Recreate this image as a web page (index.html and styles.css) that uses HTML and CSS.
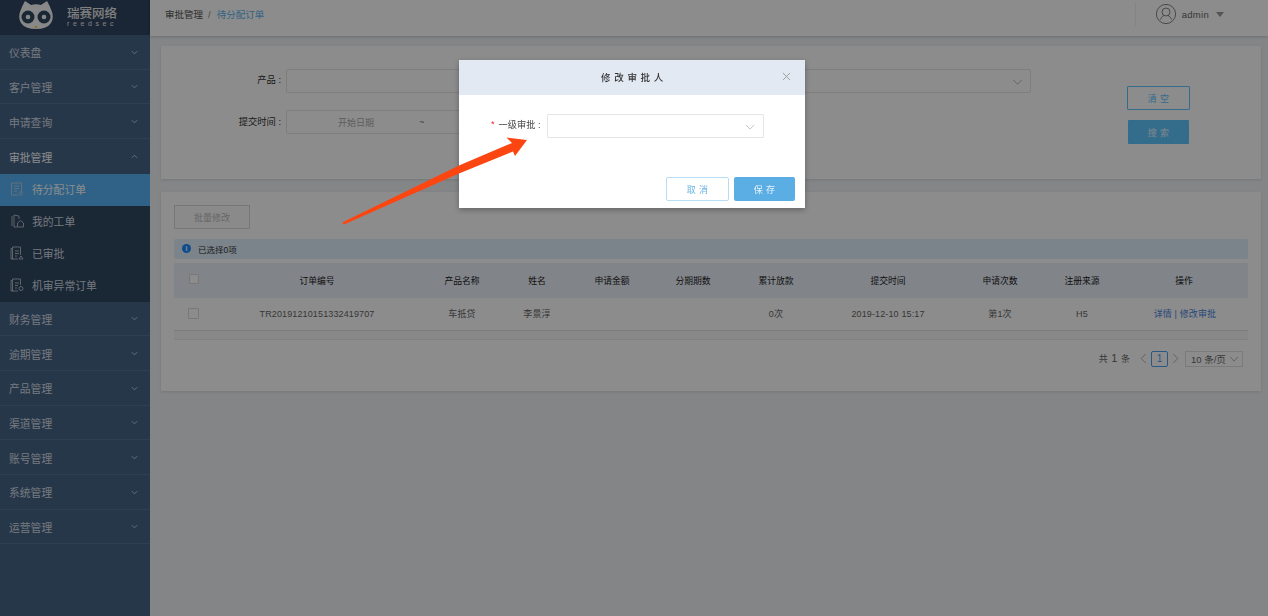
FILE: index.html
```html
<!DOCTYPE html>
<html lang="zh-CN">
<head>
<meta charset="utf-8">
<title>待分配订单</title>
<link rel="stylesheet" href="styles.css">
</head>
<body>
<div class="app">
  <aside class="sidebar">
    <div class="logo">
      <svg class="owl" width="34" height="30" viewBox="0 0 34 30">
        <path d="M6 1 L12 5 Q17 3.500 22 5 L28 1 Q31 6 33 12 Q35 18 32 23 Q28 29 17 29 Q6 29 2 23 Q-1 18 1 12 Q3 6 6 1Z" fill="#f8f8f8"/>
        <circle cx="9" cy="17" r="6.500" fill="#314761"/>
        <circle cx="25" cy="17" r="6.500" fill="#314761"/>
        <circle cx="9" cy="17" r="2.300" fill="#f8f8f8"/>
        <circle cx="25" cy="17" r="2.300" fill="#f8f8f8"/>
        <path d="M15.500 26 L18.500 26 L17 29Z" fill="#ffc83c"/>
      </svg>
      <div class="brand">
        <div class="brand-cn">瑞赛网络</div>
        <div class="brand-en">reedsec</div>
      </div>
    </div>
    <nav class="menu">
      <div class="group">仪表盘<svg class="chev" viewBox="0 0 8 5"><path d="M1 1l3 3 3-3"/></svg></div>
      <div class="group">客户管理<svg class="chev" viewBox="0 0 8 5"><path d="M1 1l3 3 3-3"/></svg></div>
      <div class="group">申请查询<svg class="chev" viewBox="0 0 8 5"><path d="M1 1l3 3 3-3"/></svg></div>
      <div class="group open">审批管理<svg class="chev" viewBox="0 0 8 5"><path d="M1 4l3-3 3 3"/></svg></div>
      <div class="sub">
        <div class="sub-item active"><svg class="sub-icon" viewBox="0 0 14 14"><path d="M1.500 1h10v9M1.500 1v12h7M4 4h5M4 6.500h5M4 9h3"/><circle cx="11" cy="11.500" r="1.600"/></svg>待分配订单</div>
        <div class="sub-item"><svg class="sub-icon" viewBox="0 0 14 14"><path d="M2 2v10M4 1l5 1v3M4 1v12h3"/><path d="M7.500 9l3-2.500 3 2.500v4h-6z"/></svg>我的工单</div>
        <div class="sub-item"><svg class="sub-icon" viewBox="0 0 14 14"><path d="M1 2.500h1.500V1h8v8M2.500 2.500V13H8M1 2.500V13h2M5 5h4M5 7.500h4M5 10h2"/><path d="M9 13l2-3 2 3z"/></svg>已审批</div>
        <div class="sub-item"><svg class="sub-icon" viewBox="0 0 14 14"><path d="M1 2.500h1.500V1h8v6M2.500 2.500V13H8M1 2.500V13h2M5 5h4M5 7.500h3M5 10h2"/><circle cx="11" cy="10.500" r="2"/></svg>机审异常订单</div>
      </div>
      <div class="group">财务管理<svg class="chev" viewBox="0 0 8 5"><path d="M1 1l3 3 3-3"/></svg></div>
      <div class="group">逾期管理<svg class="chev" viewBox="0 0 8 5"><path d="M1 1l3 3 3-3"/></svg></div>
      <div class="group">产品管理<svg class="chev" viewBox="0 0 8 5"><path d="M1 1l3 3 3-3"/></svg></div>
      <div class="group">渠道管理<svg class="chev" viewBox="0 0 8 5"><path d="M1 1l3 3 3-3"/></svg></div>
      <div class="group">账号管理<svg class="chev" viewBox="0 0 8 5"><path d="M1 1l3 3 3-3"/></svg></div>
      <div class="group">系统管理<svg class="chev" viewBox="0 0 8 5"><path d="M1 1l3 3 3-3"/></svg></div>
      <div class="group">运营管理<svg class="chev" viewBox="0 0 8 5"><path d="M1 1l3 3 3-3"/></svg></div>
    </nav>
  </aside>

  <div class="main">
    <header class="topbar">
      <div class="crumbs"><span>审批管理</span><span class="sep">/</span><span class="current">待分配订单</span></div>
      <div class="user">
        <svg class="avatar" viewBox="0 0 20 20"><circle cx="10" cy="10" r="9.600"/><circle cx="10" cy="8" r="4"/><path d="M4.500 15.500c1-3 3-3.800 3.500-3.800M15.500 15.500c-1-3-3-3.800-3.500-3.800"/></svg>
        <span class="user-name">admin</span>
        <span class="caret"></span>
      </div>
    </header>

    <div class="content">
      <section class="card form-card">
        <div class="fields">
          <div class="field-row">
            <label class="label lift">产品 :</label>
            <div class="input product"></div>
            <div class="input select">
              <svg class="select-chev" viewBox="0 0 12 7"><path d="M1 1l5 5 5-5"/></svg>
            </div>
          </div>
          <div class="field-row">
            <label class="label">提交时间 :</label>
            <div class="input range"><span class="range-start">开始日期</span><span class="tilde">~</span></div>
          </div>
        </div>
        <div class="actions">
          <button class="btn ghost">清 空</button>
          <button class="btn primary">搜 索</button>
        </div>
      </section>

      <section class="card list-card">
        <button class="batch">批量修改</button>
        <div class="alert"><span class="info">i</span>已选择0项</div>
        <table class="table">
          <colgroup>
            <col class="c-check"><col class="c-no"><col class="c-prod"><col class="c-name"><col class="c-amount"><col class="c-term"><col class="c-loan"><col class="c-time"><col class="c-count"><col class="c-src"><col class="c-op">
          </colgroup>
          <thead>
            <tr>
              <th><span class="check head-check"></span></th>
              <th>订单编号</th><th>产品名称</th><th>姓名</th><th>申请金额</th><th>分期期数</th><th>累计放款</th><th>提交时间</th><th>申请次数</th><th>注册来源</th><th>操作</th>
            </tr>
          </thead>
          <tbody>
            <tr>
              <td><span class="check"></span></td>
              <td>TR20191210151332419707</td><td>车抵贷</td><td>李景淳</td><td></td><td></td><td>0次</td><td>2019-12-10 15:17</td><td>第1次</td><td>H5</td>
              <td class="ops">详情 | 修改审批</td>
            </tr>
          </tbody>
        </table>
        <div class="scrollbar"></div>
        <div class="pager">
          <span class="total">共 <b>1</b> 条</span>
          <svg class="pg-arrow" viewBox="0 0 7 12"><path d="M6 1L1 6l5 5"/></svg>
          <span class="pg-num">1</span>
          <svg class="pg-arrow" viewBox="0 0 7 12"><path d="M1 1l5 5-5 5"/></svg>
          <span class="pg-size">10 条/页<svg class="pg-chev" viewBox="0 0 12 7"><path d="M1 1l4.500 5 4.500-5"/></svg></span>
        </div>
      </section>
    </div>
  </div>
</div>

<div class="mask">
  <div class="modal">
    <div class="modal-head">
      <span class="modal-title">修改审批人</span>
      <svg class="modal-close" viewBox="0 0 10 10"><path d="M1 1l8 8M9 1l-8 8"/></svg>
    </div>
    <div class="modal-body">
      <div class="modal-label"><span class="star">*</span><span>一级审批 :</span></div>
      <div class="modal-select"><svg class="modal-chev" viewBox="0 0 12 7"><path d="M1 1l5 5 5-5"/></svg></div>
    </div>
    <div class="modal-foot">
      <button class="m-btn cancel">取 消</button>
      <button class="m-btn save">保 存</button>
    </div>
  </div>
</div>

<svg class="arrow" width="1268" height="616" viewBox="0 0 1268 616">
  <polygon points="342,222.500 459,165.500 512,143 506.500,137.500 527,140 515,156 513,151.500 459,173.500 344,224.500" fill="#fb4612"/>
</svg>
</body>
</html>
```
FILE: styles.css
```css
* { box-sizing: border-box; }
html, body { margin: 0; height: 100%; overflow: hidden; }
body {
  font-family: "Liberation Sans", "Noto Sans CJK SC", sans-serif;
  font-size: 9px;
  color: #333;
  background: #f0f3f5;
}
.app { display: flex; height: 616px; }

.sidebar { width: 150px; flex: none; background: #486487; }
.logo {
  height: 35px;
  background: #314561;
  display: flex;
  padding-left: 19px;
  overflow: hidden;
}
.owl { flex: none; }
.brand { margin-left: 14px; color: #e8e8e8; padding-top: 7px; }
.brand-cn { font-size: 12.500px; font-weight: 500; line-height: 15px; white-space: nowrap; }
.brand-en { font-size: 7px; line-height: 8px; letter-spacing: 3.600px; margin-top: -2px; }

.group {
  height: 34.670px;
  display: flex;
  align-items: center;
  justify-content: space-between;
  padding: 1px 12px 0 9px;
  font-size: 10.800px;
  color: #d5dde5;
  border-bottom: 1px solid #55749a;
}
.group.open { color: #fff; border-bottom: 0; }
.chev { width: 7px; height: 5px; fill: none; stroke: #c8d0d8; stroke-width: 1.100; }
.sub { background: #314761; }
.sub-item {
  height: 32px;
  display: flex;
  align-items: center;
  padding: 0 0 2px 10px;
  font-size: 10.800px;
  color: #d5dde5;
}
.sub-item.active { background: #56b3f5; color: #fff; }
.sub-icon { width: 14px; height: 14px; margin-right: 8px; fill: none; stroke: #c9d2db; stroke-width: .8; }

.main { flex: 1; min-width: 0; display: flex; flex-direction: column; }
.topbar {
  height: 36px;
  background: #fff;
  display: flex;
  align-items: center;
  justify-content: space-between;
  padding: 0 44px 8px 15px;
  box-shadow: 0 1px 3px rgba(0, 0, 0, .18);
  position: relative;
}
.crumbs { font-size: 9.500px; color: #555; display: flex; align-items: baseline; }
.sep { margin: 0 6px 0 5px; color: #888; }
.current { color: #5cb4ee; }
.user {
  display: flex;
  align-items: center;
  height: 24px;
  padding-left: 20px;
  border-left: 1px solid #f0f0f0;
}
.avatar { width: 20px; height: 20px; fill: none; stroke: #666; stroke-width: .8; }
.user-name { margin-left: 6px; font-size: 9.500px; letter-spacing: .3px; color: #666; }
.caret {
  margin-left: 7px;
  border-left: 4px solid transparent;
  border-right: 4px solid transparent;
  border-top: 5px solid #999;
}

.content { padding: 10px 7px 0 11px; display: flex; flex-direction: column; gap: 13px; }
.card { background: #fff; box-shadow: 0 1px 3px rgba(0, 0, 0, .12); }

.form-card { height: 133px; display: flex; padding-top: 23px; }
.fields { width: 870px; display: flex; flex-direction: column; gap: 17px; flex: none; }
.field-row { display: flex; align-items: center; }
.label { width: 120px; text-align: right; font-size: 9.300px; color: #333; padding-bottom: 2px; flex: none; }
.label.lift { padding-bottom: 5px; }
.input { height: 24px; border: 1px solid #e6e6e6; border-radius: 2px; margin-left: 5px; position: relative; }
.product { width: 330px; }
.select { width: 330px; margin-left: 85px; }
.range { width: 350px; color: #aaa; display: flex; align-items: center; font-size: 9px; padding-left: 51px; }
.range-start { width: 81px; }
.tilde { width: 60px; color: #777; }
.select-chev { position: absolute; right: 7px; top: 9px; width: 11px; height: 6px; fill: none; stroke: #aaa; stroke-width: 1; }
.actions { margin: 17px 0 0 96px; display: flex; flex-direction: column; align-items: center; gap: 10px; width: 63px; }
.btn { font: inherit; font-size: 9px; height: 24px; border-radius: 1px; letter-spacing: .3px; }
.ghost { width: 63px; background: #fff; border: 1px solid #60c5ff; color: #60c5ff; }
.primary { width: 61px; background: #60c5ff; border: 0; color: #e8f6ff; }

.list-card { height: 199px; padding: 13px 13px 0; }
.batch {
  display: block;
  width: 76px;
  height: 24px;
  font: inherit;
  font-size: 9px;
  color: #bbb;
  background: #fbfbfb;
  border: 1px solid #d9d9d9;
}
.alert {
  margin-top: 10px;
  height: 20px;
  border-radius: 2px;
  background: #e1f1fe;
  display: flex;
  align-items: center;
  padding-left: 8px;
  font-size: 8.500px;
  color: #333;
}
.info {
  width: 9px;
  height: 9px;
  border-radius: 50%;
  background: #1a8cff;
  color: #fff;
  font-size: 7px;
  font-weight: bold;
  line-height: 9px;
  text-align: center;
  margin-right: 7px;
  margin-top: -2px;
}
.table { margin-top: 4px; width: 1074px; border-collapse: collapse; table-layout: fixed; }
.c-check { width: 40px; } .c-no { width: 206px; } .c-prod { width: 84px; } .c-name { width: 66px; }
.c-amount { width: 84px; } .c-term { width: 78px; } .c-loan { width: 88px; } .c-time { width: 136px; }
.c-count { width: 88px; } .c-src { width: 76px; } .c-op { width: 128px; }
th { height: 35px; background: #ecf2fc; font-weight: normal; font-size: 8.800px; color: #222; text-align: center; padding: 0; }
td { height: 32px; font-size: 9px; color: #666; text-align: center; padding: 0; letter-spacing: .13px; border-bottom: 1px solid #e4e4e4; }
.ops { color: #4a86e0; padding-left: 2px; }
.check { display: block; width: 11px; height: 11px; margin: 0 auto 0 14px; border: 1px solid #d9d9d9; border-radius: 1px; background: #fff; }
.head-check { margin-top: -4px; margin-left: 15px; width: 10px; height: 10px; }
.scrollbar { height: 9px; background: #f7f7f7; border-bottom: 1px solid #ececec; }
.pager { display: flex; align-items: center; justify-content: flex-end; margin-top: 11px; padding-right: 5px; font-size: 9px; color: #666; }
.total { margin-right: 1px; }
.total b { font-weight: normal; font-size: 11px; margin: 0 1px; }
.pg-arrow { width: 7px; height: 11px; margin: 0 5px 0 9px; fill: none; stroke: #aaa; stroke-width: 1; }
.pg-num { width: 17px; height: 16px; margin-left: -1px; border: 1px solid #4aa3f0; border-radius: 2px; color: #4aa3f0; font-size: 10px; text-align: center; line-height: 14px; }
.pg-num + .pg-arrow { margin: 0 6px 0 4px; }
.pg-size { width: 58px; height: 16px; border: 1px solid #e0e0e0; display: flex; align-items: center; justify-content: space-between; padding: 0 2px 0 5px; font-size: 9.500px; white-space: nowrap; }
.pg-chev { width: 11px; height: 6px; fill: none; stroke: #aaa; stroke-width: 1; }

.mask {
  position: fixed;
  inset: 0;
  background: rgba(0, 0, 0, .45);
  display: flex;
  justify-content: center;
  padding: 60px 4px 0 0;
}
.modal { width: 346px; height: 148px; background: #fff; box-shadow: 0 2px 6px rgba(0, 0, 0, .3); display: flex; flex-direction: column; }
.modal-head { height: 35px; background: #e3e9f3; position: relative; display: flex; align-items: center; justify-content: center; flex: none; padding-bottom: 2px; }
.modal-title { font-size: 9.500px; font-weight: 500; letter-spacing: 3.700px; color: #333; margin-right: -4px; }
.modal-close { position: absolute; right: 14px; top: 12px; width: 9px; height: 9px; fill: none; stroke: #999; stroke-width: 1; }
.modal-body { display: flex; align-items: center; padding: 19px 0 0 32px; }
.modal-label { display: flex; gap: 4px; align-items: center; font-size: 9.200px; color: #444; width: 56px; white-space: nowrap; flex: none; padding-bottom: 4px; }
.star { color: #f5222d; }
.modal-select { position: relative; width: 217px; height: 24px; border: 1px solid #e5e5e5; border-radius: 1px; }
.modal-chev { position: absolute; right: 8px; top: 9px; width: 10px; height: 6px; fill: none; stroke: #bbb; stroke-width: 1; }
.modal-foot { display: flex; justify-content: flex-end; gap: 5px; padding: 39px 10px 0 0; }
.m-btn { font: inherit; font-size: 9px; letter-spacing: .3px; height: 24px; border-radius: 2px; }
.cancel { width: 63px; background: #fff; border: 1px solid #b7ddf6; color: #6ab4e6; }
.save { width: 61px; background: #5aaee4; border: 0; color: #e6f3fb; }

.arrow { position: fixed; left: 0; top: 0; pointer-events: none; }
```
